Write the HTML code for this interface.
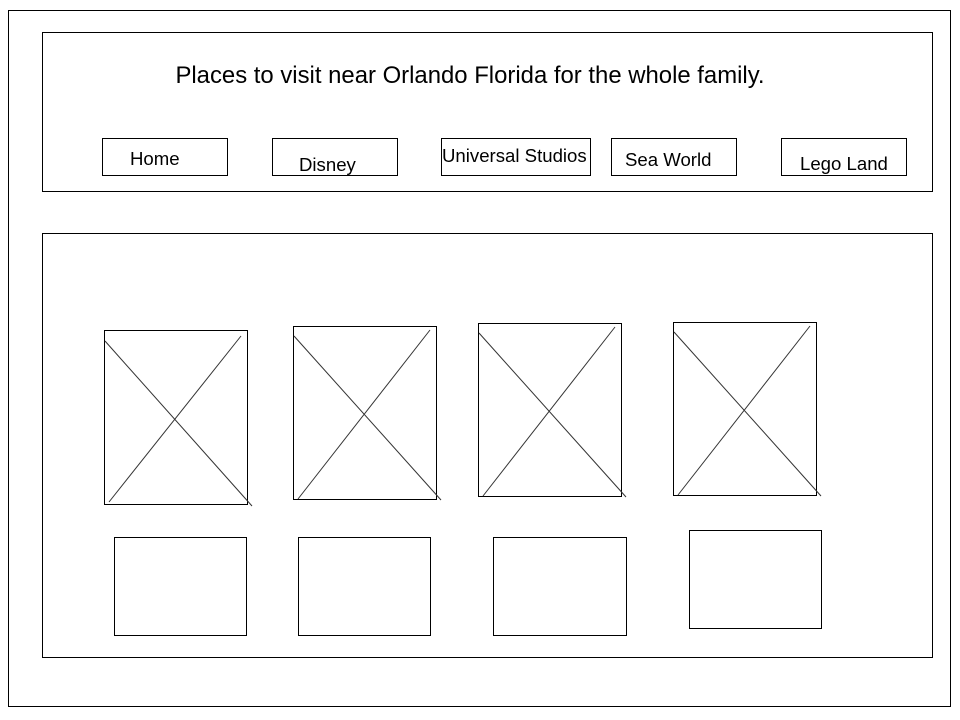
<!DOCTYPE html>
<html><head><style>html,body{margin:0;padding:0;background:#fff;}svg{display:block}</style></head>
<body>
<svg width="960" height="720" xmlns="http://www.w3.org/2000/svg" font-family="Liberation Sans, Arial, sans-serif" fill="none" stroke="#000">
<rect x="8.5" y="10.5" width="942" height="696"/>
<rect x="42.5" y="32.5" width="890" height="159"/>
<text x="470" y="83" font-size="23.9" fill="#000" stroke="none" text-anchor="middle">Places to visit near Orlando Florida for the whole family.</text>
<rect x="102.5" y="138.5" width="125" height="37"/>
<rect x="272.5" y="138.5" width="125" height="37"/>
<rect x="441.5" y="138.5" width="149" height="37"/>
<rect x="611.5" y="138.5" width="125" height="37"/>
<rect x="781.5" y="138.5" width="125" height="37"/>
<g fill="#000" stroke="none" font-size="18.6">
<text x="130" y="165">Home</text>
<text x="299" y="171">Disney</text>
<text x="442" y="162">Universal Studios</text>
<text x="625" y="166">Sea World</text>
<text x="800" y="170">Lego Land</text>
</g>
<rect x="42.5" y="233.5" width="890" height="424"/>
<g stroke-width="1">
<rect x="104.5" y="330.5" width="143" height="174"/>
<line x1="105" y1="341" x2="252" y2="506" stroke="#333"/><line x1="109" y1="502" x2="241" y2="336" stroke="#333"/>
<rect x="293.5" y="326.5" width="143" height="173"/>
<line x1="294" y1="336" x2="441" y2="500" stroke="#333"/><line x1="298" y1="499" x2="430" y2="330" stroke="#333"/>
<rect x="478.5" y="323.5" width="143" height="173"/>
<line x1="479" y1="333" x2="626" y2="497" stroke="#333"/><line x1="483" y1="496" x2="615" y2="327" stroke="#333"/>
<rect x="673.5" y="322.5" width="143" height="173"/>
<line x1="674" y1="332" x2="821" y2="496" stroke="#333"/><line x1="678" y1="495" x2="810" y2="326" stroke="#333"/>
<rect x="114.5" y="537.5" width="132" height="98"/>
<rect x="298.5" y="537.5" width="132" height="98"/>
<rect x="493.5" y="537.5" width="133" height="98"/>
<rect x="689.5" y="530.5" width="132" height="98"/>
</g>
</svg>
</body></html>
